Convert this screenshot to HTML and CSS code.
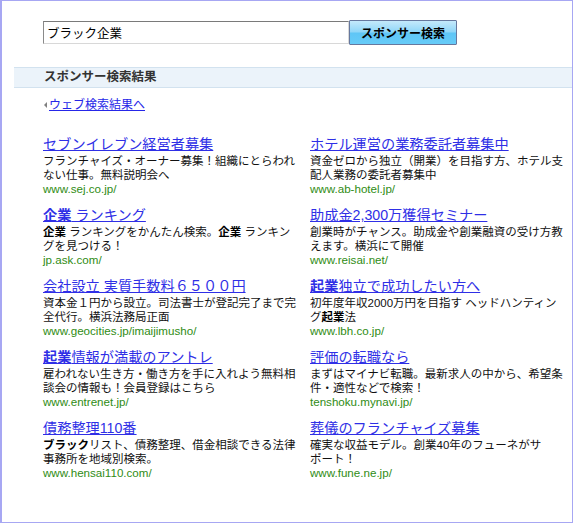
FILE: index.html
```html
<!DOCTYPE html>
<html lang="ja">
<head>
<meta charset="utf-8">
<title>スポンサー検索結果</title>
<link rel="stylesheet" href="styles.css">
</head>
<body>
<div class="page">
  <form class="search">
    <input class="search-input" type="text" value="ブラック企業">
    <button class="search-btn" type="button">スポンサー検索</button>
  </form>
  <div class="results-bar">スポンサー検索結果</div>
  <div class="back"><span class="tri"></span><a href="#">ウェブ検索結果へ</a></div>
  <div class="ads">
    <div class="ad">
      <a class="ad-title" href="#">セブンイレブン経営者募集</a>
      <p class="ad-desc">フランチャイズ・オーナー募集！組織にとらわれ<br>ない仕事。無料説明会へ</p>
      <span class="ad-url">www.sej.co.jp/</span>
    </div>
    <div class="ad">
      <a class="ad-title" href="#">ホテル運営の業務委託者募集中</a>
      <p class="ad-desc">資金ゼロから独立（開業）を目指す方、ホテル支<br>配人業務の委託者募集中</p>
      <span class="ad-url">www.ab-hotel.jp/</span>
    </div>
    <div class="ad">
      <a class="ad-title" href="#"><b>企業</b> ランキング</a>
      <p class="ad-desc"><b>企業</b> ランキングをかんたん検索。<b>企業</b> ランキン<br>グを見つける！</p>
      <span class="ad-url">jp.ask.com/</span>
    </div>
    <div class="ad">
      <a class="ad-title" href="#">助成金2,300万獲得セミナー</a>
      <p class="ad-desc">創業時がチャンス。助成金や創業融資の受け方教<br>えます。横浜にて開催</p>
      <span class="ad-url">www.reisai.net/</span>
    </div>
    <div class="ad">
      <a class="ad-title" href="#">会社設立 実質手数料６５００円</a>
      <p class="ad-desc">資本金１円から設立。司法書士が登記完了まで完<br>全代行。横浜法務局正面</p>
      <span class="ad-url">www.geocities.jp/imaijimusho/</span>
    </div>
    <div class="ad">
      <a class="ad-title" href="#"><b>起業</b>独立で成功したい方へ</a>
      <p class="ad-desc">初年度年収2000万円を目指す ヘッドハンティン<br>グ<b>起業</b>法</p>
      <span class="ad-url">www.lbh.co.jp/</span>
    </div>
    <div class="ad">
      <a class="ad-title" href="#"><b>起業</b>情報が満載のアントレ</a>
      <p class="ad-desc">雇われない生き方・働き方を手に入れよう無料相<br>談会の情報も！会員登録はこちら</p>
      <span class="ad-url">www.entrenet.jp/</span>
    </div>
    <div class="ad">
      <a class="ad-title" href="#">評価の転職なら</a>
      <p class="ad-desc">まずはマイナビ転職。最新求人の中から、希望条<br>件・適性などで検索！</p>
      <span class="ad-url">tenshoku.mynavi.jp/</span>
    </div>
    <div class="ad">
      <a class="ad-title" href="#">債務整理110番</a>
      <p class="ad-desc"><b>ブラック</b>リスト、債務整理、借金相談できる法律<br>事務所を地域別検索。</p>
      <span class="ad-url">www.hensai110.com/</span>
    </div>
    <div class="ad">
      <a class="ad-title" href="#">葬儀のフランチャイズ募集</a>
      <p class="ad-desc">確実な収益モデル。創業40年のフューネがサ<br>ポート！</p>
      <span class="ad-url">www.fune.ne.jp/</span>
    </div>
  </div>
</div>
</body>
</html>
```

FILE: styles.css
```css
* { box-sizing: border-box; }

html, body {
  margin: 0;
  padding: 0;
  background: #ffffff;
}

body {
  font-family: "Liberation Sans", "Noto Sans CJK JP", sans-serif;
  color: #111;
}

.page {
  width: 573px;
  height: 523px;
  border: 1px solid #a7a7f3;
  border-left-width: 2px;
  overflow: hidden;
}

.search {
  display: flex;
  align-items: center;
  margin: 19px 0 0 41px;
  height: 25px;
}

.search-input {
  width: 306px;
  height: 23px;
  margin: 0;
  padding: 0 0 0 3px;
  border: 1px solid #a0a0a0;
  border-top-color: #7a7a7a;
  border-left-color: #8a8a8a;
  border-bottom-color: #d8d8d8;
  border-right-color: #d8d8d8;
  font-family: "Liberation Sans", "Noto Sans CJK JP", sans-serif;
  font-size: 12.5px;
  color: #000;
  outline: none;
}

.search-btn {
  width: 108px;
  height: 25px;
  margin: 0;
  padding: 0;
  border: 1px solid #66789e;
  border-radius: 1px;
  background: linear-gradient(to bottom, #c4e9fb 0%, #8fd6f8 48%, #5fc6f6 52%, #66cbf8 100%);
  font-family: "Liberation Sans", "Noto Sans CJK JP", sans-serif;
  font-weight: bold;
  font-size: 12px;
  color: #000;
}

.results-bar {
  margin: 22px 0 0 12px;
  height: 21px;
  padding-left: 30px;
  border-top: 1px solid #d2e2ef;
  border-bottom: 1px solid #d2e2ef;
  background: #ebf3fa;
  font-size: 12.5px;
  font-weight: bold;
  line-height: 19px;
  color: #333;
}

.back {
  display: flex;
  align-items: center;
  margin: 10px 0 0 42px;
  height: 14px;
  font-size: 12px;
  line-height: 14px;
}

.tri {
  width: 0;
  height: 0;
  border-top: 3px solid transparent;
  border-bottom: 3px solid transparent;
  border-right: 3px solid #808080;
  margin-right: 2px;
}

.back a {
  color: #2626e8;
  text-decoration: underline;
}

.ads {
  display: grid;
  grid-template-columns: 267px 262px;
  row-gap: 10px;
  margin: 22px 0 0 41px;
}

.ad {
  display: flex;
  flex-direction: column;
  align-items: flex-start;
}

.ad-title {
  font-size: 14.2px;
  line-height: 20px;
  color: #2f2fe6;
  text-decoration: underline;
  white-space: nowrap;
}

.ad-title b { font-weight: bold; }

.ad-desc {
  margin: 0;
  font-size: 11.5px;
  line-height: 14px;
  color: #111;
  white-space: nowrap;
}

.ad-desc b { font-weight: bold; color: #000; }

.ad-url {
  font-size: 11.6px;
  line-height: 13px;
  color: #2f8c14;
}
```
